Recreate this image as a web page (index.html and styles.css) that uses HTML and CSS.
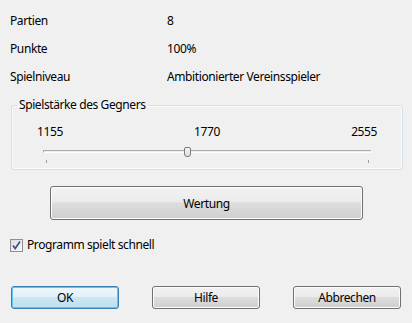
FILE: index.html
```html
<!DOCTYPE html>
<html lang="de">
<head>
  <meta charset="UTF-8">
  <title>Spielstärke</title>
  <link rel="stylesheet" href="styles.css">
</head>
<body>
  <div class="dialog">

    <!-- Statistik -->
    <div class="info">
      <span>Partien</span><span>8</span>
      <span>Punkte</span><span>100%</span>
      <span>Spielniveau</span><span>Ambitionierter Vereinsspieler</span>
    </div>

    <!-- Gegnerstärke -->
    <fieldset class="group">
      <legend>Spielstärke des Gegners</legend>
      <div class="scale">
        <span>1155</span>
        <span>1770</span>
        <span>2555</span>
      </div>
      <div class="slider">
        <div class="track"></div>
        <div class="thumb" style="left: calc(43.9% - 3px);"></div>
      </div>
      <div class="ticks"><i></i><i></i></div>
    </fieldset>

    <button type="button" class="btn btn-wide">Wertung</button>

    <label class="check">
      <span class="box">
        <svg width="11" height="11" viewBox="0 0 11 11">
          <path d="M2 5.5 L4.2 8.5 L9 1.5" fill="none" stroke="#3f5287" stroke-width="1.7"/>
        </svg>
      </span>
      Programm spielt schnell
    </label>

    <div class="actions">
      <button type="button" class="btn btn-default">OK</button>
      <button type="button" class="btn">Hilfe</button>
      <button type="button" class="btn">Abbrechen</button>
    </div>
  </div>
</body>
</html>
```

FILE: styles.css
```css
body {
  margin: 0;
  background: #f0f0f0;
  font-family: "Noto Sans", sans-serif;
  font-size: 12px;
  letter-spacing: -0.4px;
  color: #000;
}
.dialog {
  padding-top: 7px;
  width: 412px;
  height: 323px;
  box-sizing: border-box;
}
.info {
  display: grid;
  grid-template-columns: 157px 1fr;
  grid-auto-rows: 28px;
  line-height: 28px;
  padding-left: 10px;
}
.group {
  margin: 6px 0 0 11px;
  width: 392px;
  box-sizing: border-box;
  padding: 11px 0 6px;
  border: 1px solid #d5dfe5;
  border-radius: 3px;
  box-shadow: inset 0 0 0 1px #fbfbfb;
}
.group legend {
  margin-left: 5px;
  padding: 0 2px;
  line-height: 16px;
}
.scale {
  display: flex;
  justify-content: space-between;
  line-height: 16px;
  padding: 0 25px 0 25px;
}
.slider {
  position: relative;
  height: 10px;
  margin: 7px 31px 0 31px;
}
.track {
  position: absolute;
  left: 0;
  right: 0;
  top: 3px;
  height: 1px;
  border-top: 1px solid #a9a9a9;
  border-left: 1px solid #a9a9a9;
  border-bottom: 1px solid #fff;
}
.thumb {
  position: absolute;
  top: 0;
  width: 7px;
  height: 10px;
  box-sizing: border-box;
  border: 1px solid #7a7a7a;
  border-radius: 2px 2px 3px 3px;
  background: linear-gradient(#f6f6f6, #dedede);
}
.ticks {
  display: flex;
  justify-content: space-between;
  margin: 3px 33px 0 34px;
  height: 3px;
}
.ticks i {
  width: 1px;
  background: #a0a0a0;
}
.btn {
  font-family: inherit;
  font-size: 12px;
  letter-spacing: inherit;
  color: #000;
  width: 108px;
  height: 23px;
  padding: 0;
  border: 1px solid #707070;
  border-radius: 3px;
  background: linear-gradient(#f2f2f2 0%, #ebebeb 45%, #dddddd 50%, #cfcfcf 100%);
  box-shadow: inset 0 0 0 1px #fcfcfc;
}
.btn-wide {
  display: block;
  margin: 16px 0 0 50px;
  width: 313px;
  height: 34px;
}
.btn-default {
  border-color: #3c7fb1;
  background: linear-gradient(#edf6fb 0%, #e3f1f9 45%, #cde6f3 50%, #bedff0 100%);
  box-shadow: inset 0 0 0 1px #5fc6ef;
}
.check {
  display: flex;
  align-items: center;
  gap: 4px;
  margin: 17px 0 0 10px;
  line-height: 16px;
}
.check .box {
  width: 13px;
  height: 13px;
  box-sizing: border-box;
  border: 1px solid #8e8f8f;
  background: linear-gradient(135deg, #dcdcdc, #fbfbfb);
  display: flex;
  align-items: center;
  justify-content: center;
}
.check svg {
  display: block;
}
.actions {
  display: flex;
  gap: 33px;
  margin: 33px 0 0 11px;
}
```
